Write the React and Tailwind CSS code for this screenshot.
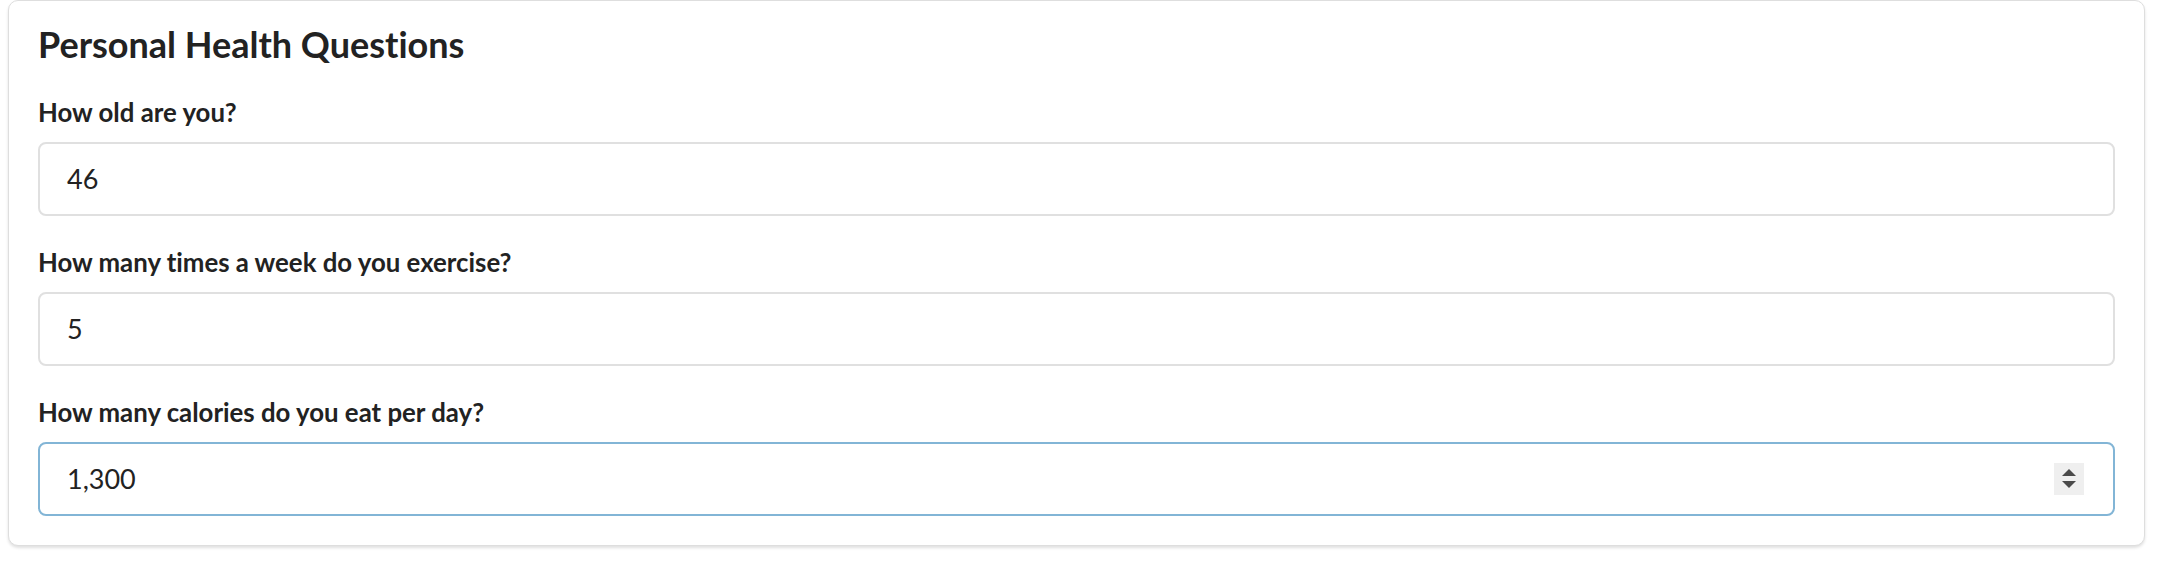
import React from "react";

const questions = [
  { label: "How old are you?", value: "46" },
  { label: "How many times a week do you exercise?", value: "5" },
  { label: "How many calories do you eat per day?", value: "1,300", focused: true },
];

function Spinner() {
  return (
    <div className="flex h-[32px] w-[30px] items-center justify-center bg-[#efefef]">
      <svg width="14" height="20" viewBox="0 0 14 20">
        <polygon points="7,0 14,7 0,7" fill="#4a4a4a" />
        <polygon points="0,12 14,12 7,19" fill="#4a4a4a" />
      </svg>
    </div>
  );
}

export default function App() {
  return (
    <div className="min-h-screen bg-white font-['Lato',sans-serif] text-[#222] [font-variant-ligatures:none]">
      <div className="ml-[8px] w-[2137px] rounded-[10px] border border-[#dedede] bg-white px-[29px] pb-[29px] pt-[22px] shadow-[0_2px_3px_rgba(0,0,0,0.12)]">
        <h2 className="h-[43px] text-[36px] font-bold leading-[43px]">
          Personal Health Questions
        </h2>

        {questions.map((q, i) => (
          <div key={i} className={i === 0 ? "mt-[31px]" : "mt-[31px]"}>
            <label className="block text-[25.8px] font-bold leading-[30px]">
              {q.label}
            </label>
            <div
              className={
                "mt-[15px] flex h-[74px] items-center justify-between rounded-[8px] border-2 pl-[27px] pr-[29px] text-[27px] leading-[32px] " +
                (q.focused ? "border-[#82b5d6]" : "border-[#e0e0e0]")
              }
            >
              <span>{q.value}</span>
              {q.focused && <Spinner />}
            </div>
          </div>
        ))}
      </div>
    </div>
  );
}
